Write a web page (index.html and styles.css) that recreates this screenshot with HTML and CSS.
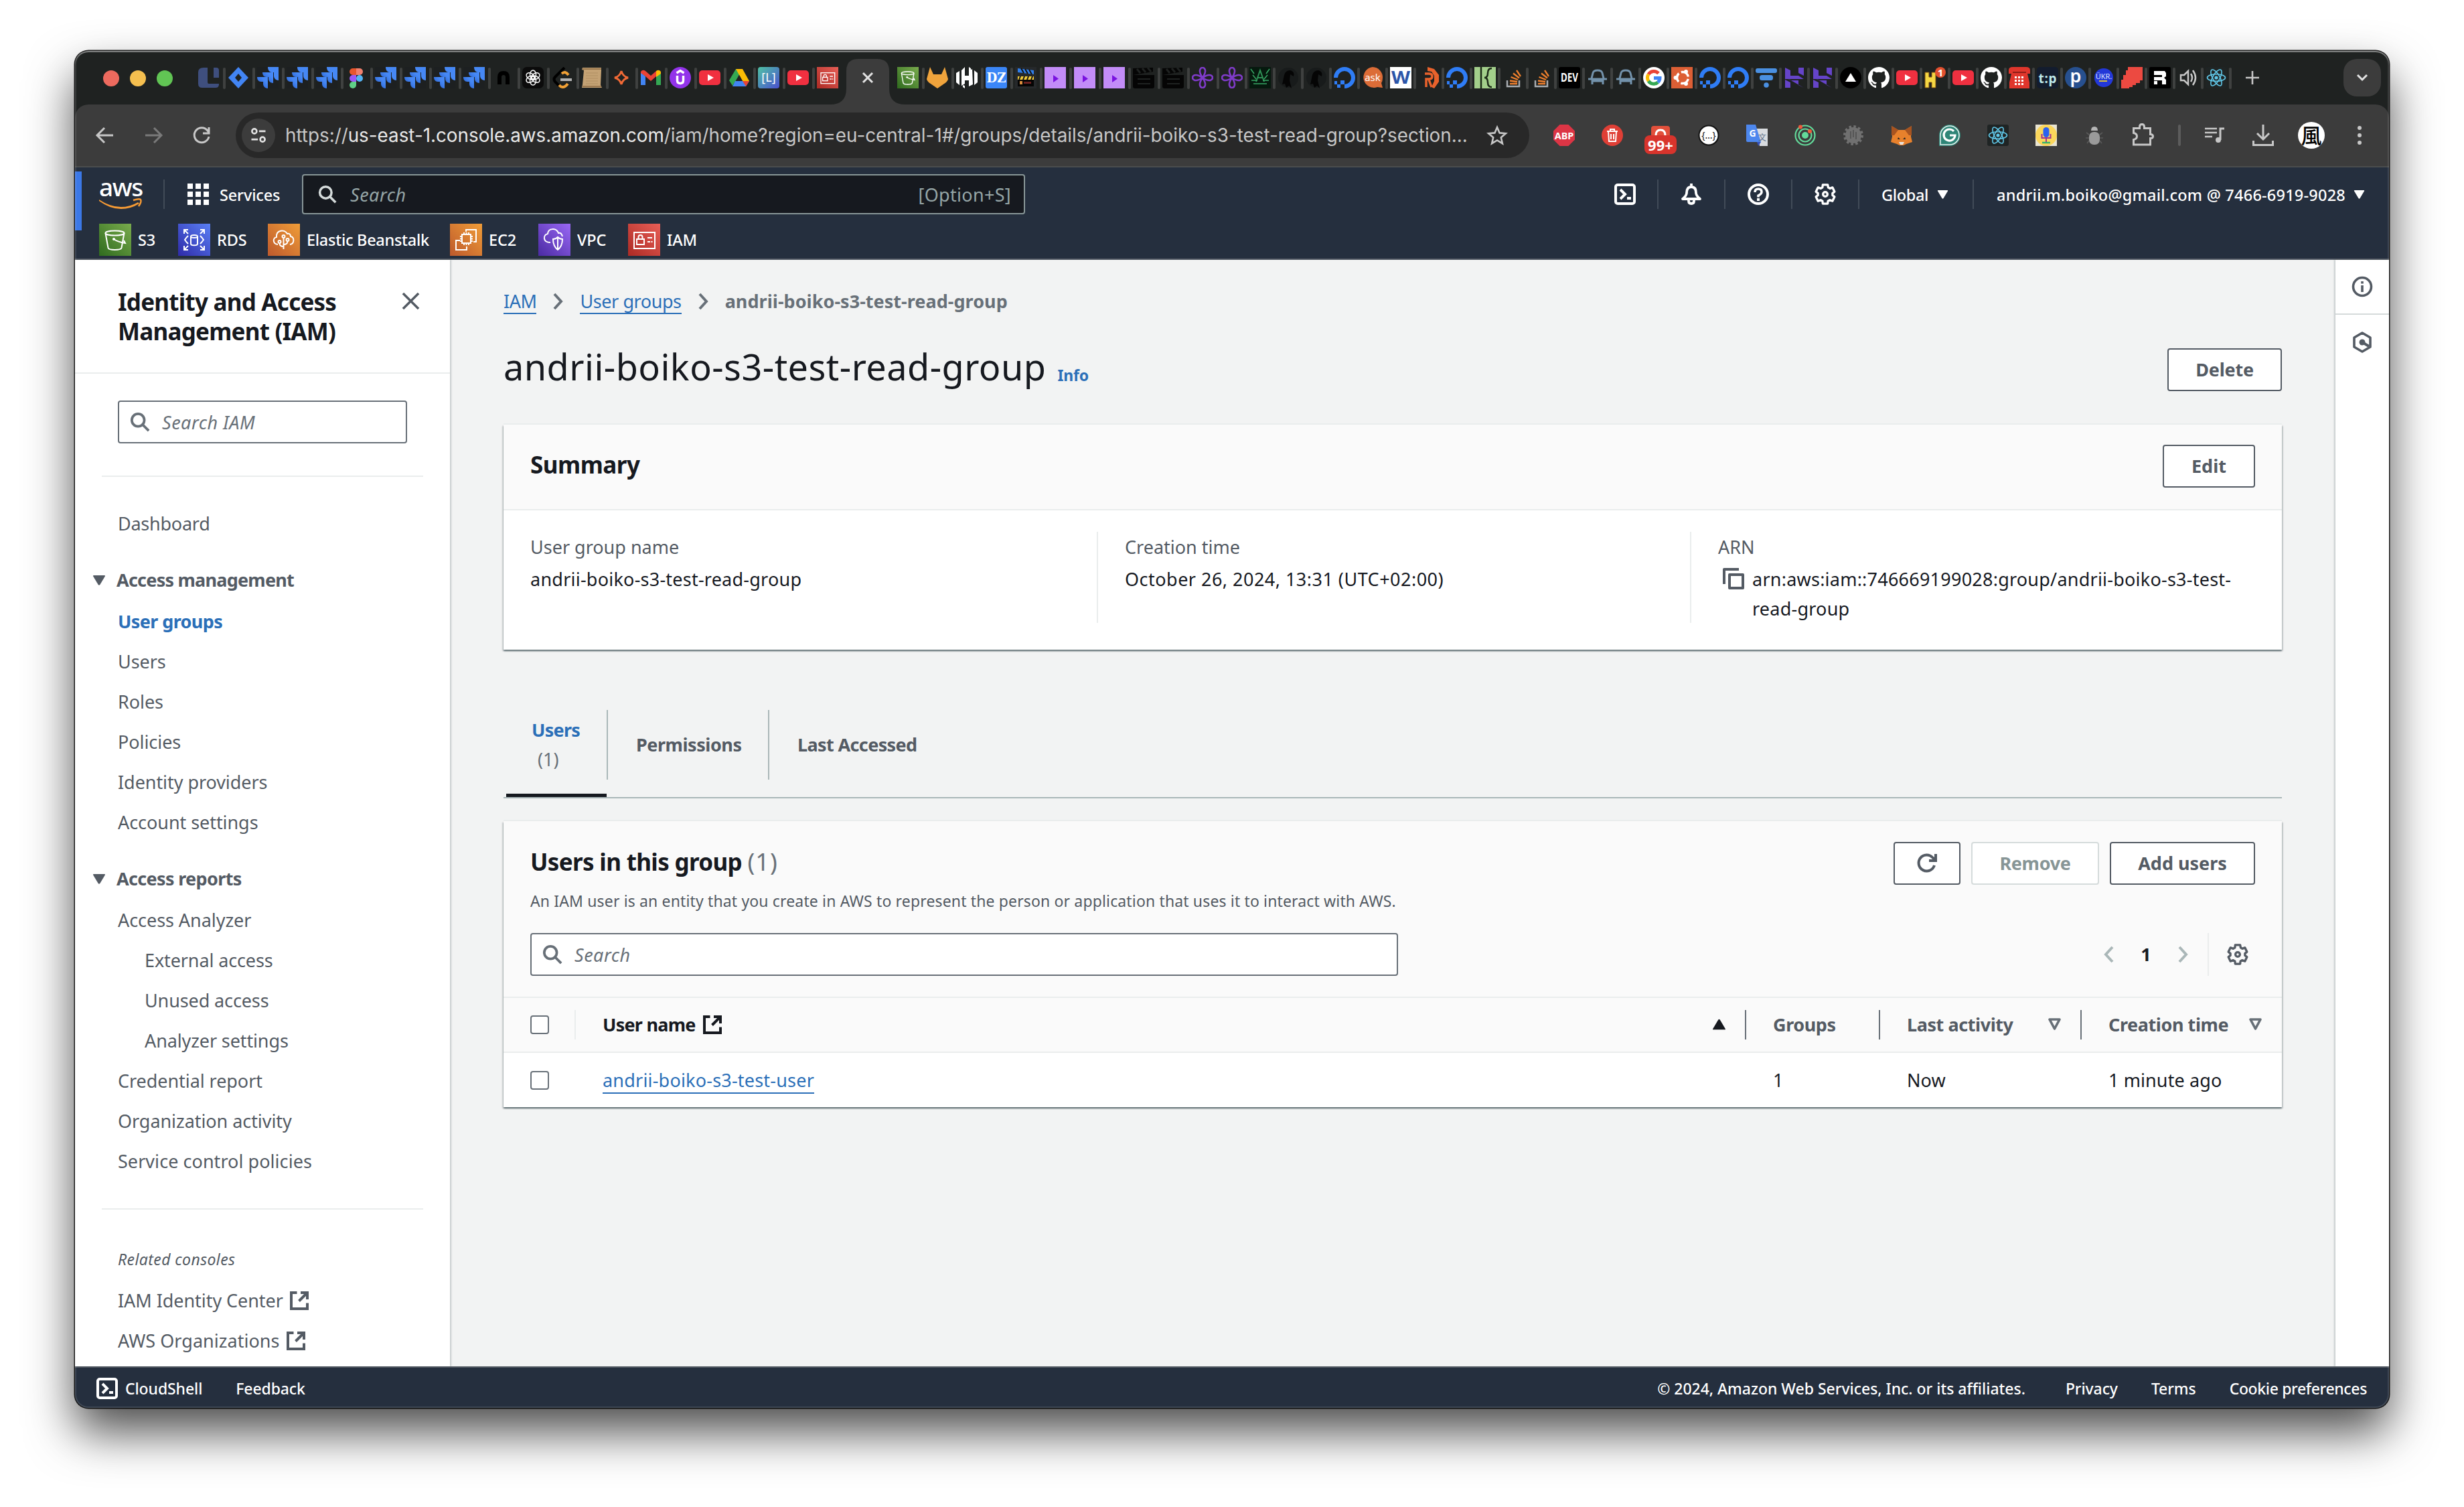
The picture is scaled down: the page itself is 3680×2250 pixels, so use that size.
FILE: index.html
```html
<!DOCTYPE html>
<html lang="en">
<head>
<meta charset="utf-8">
<title>andrii-boiko-s3-test-read-group | IAM | Global</title>
<link rel="stylesheet" href="styles.css">
</head>
<body>
<svg class="sprite" width="0" height="0">
  <defs>
    <linearGradient id="g-green" x1="0" y1="1" x2="1" y2="0"><stop offset="0" stop-color="#2f6b1e"/><stop offset="1" stop-color="#79ab4d"/></linearGradient>
    <linearGradient id="g-blue" x1="0" y1="1" x2="1" y2="0"><stop offset="0" stop-color="#2e2aa8"/><stop offset="1" stop-color="#5a80f5"/></linearGradient>
    <linearGradient id="g-orange" x1="0" y1="1" x2="1" y2="0"><stop offset="0" stop-color="#bd592c"/><stop offset="1" stop-color="#f09d38"/></linearGradient>
    <linearGradient id="g-purple" x1="0" y1="1" x2="1" y2="0"><stop offset="0" stop-color="#4a2aa2"/><stop offset="1" stop-color="#9a68f5"/></linearGradient>
    <linearGradient id="g-red" x1="0" y1="1" x2="1" y2="0"><stop offset="0" stop-color="#ac2a24"/><stop offset="1" stop-color="#e85f57"/></linearGradient>
    <linearGradient id="g-teal" x1="0" y1="0" x2="1" y2="1"><stop offset="0" stop-color="#4fc3a5"/><stop offset="1" stop-color="#4a4fd0"/></linearGradient>
    <linearGradient id="g-jira" x1="1" y1="0" x2="0" y2="1"><stop offset=".3" stop-color="#4688f5"/><stop offset="1" stop-color="#1f53c0"/></linearGradient>

    <symbol id="s3" viewBox="0 0 48 48"><rect width="48" height="48" fill="url(#g-green)"/><g fill="none" stroke="#fff" stroke-width="2"><ellipse cx="23.500" cy="14" rx="14" ry="3.500"/><path d="M9.500 14l4 22c1 4 19 4 20 0l4-22M22 23c4 3 10 5 17 6l-2-4"/></g><circle cx="22" cy="23" r="2" fill="#fff"/></symbol>
    <symbol id="rds" viewBox="0 0 48 48"><rect width="48" height="48" fill="url(#g-blue)"/><g fill="none" stroke="#fff" stroke-width="2"><ellipse cx="24" cy="19" rx="5" ry="2"/><path d="M19 19v11c0 3 10 3 10 0V19M9 9l6 6M9 15V9h6M39 9l-6 6M39 15V9h-6M9 39l6-6M9 33v6h6M39 39l-6-6M39 33v6h-6M15 18c-2 2-3 3-5 6 2 3 3 4 5 6M33 18c2 2 3 3 5 6-2 3-3 4-5 6"/></g></symbol>
    <symbol id="eb" viewBox="0 0 48 48"><rect width="48" height="48" fill="url(#g-orange)"/><g fill="none" stroke="#fff" stroke-width="2"><path d="M15 31c-8-1-8-10-2-11-1-11 12-12 16-5 3-1 5 1 5 4 6 1 6 11-1 12M23.500 38V21M23.500 34c-5 0-6-3-6-5M23.500 31c5 0 6-2 6-5"/><circle cx="23.500" cy="19" r="2"/><circle cx="17.500" cy="27" r="2"/><circle cx="29.500" cy="24" r="2"/></g></symbol>
    <symbol id="ec2" viewBox="0 0 48 48"><rect width="48" height="48" fill="url(#g-orange)"/><g fill="none" stroke="#fff" stroke-width="2"><rect x="18" y="16" width="13" height="13"/><path d="M21 13v3m3.500-3v3m3.500-3v3m-7 13v3m3.500-3v3m3.500-3v3M15 19h3m-3 3.500h3m-3 3.500h3M31 19h3m-3 3.500h3m-3 3.500h3M15 25H9v14h16v-5M24 12V9h15v18h-4"/></g></symbol>
    <symbol id="vpc" viewBox="0 0 48 48"><rect width="48" height="48" fill="url(#g-purple)"/><g fill="none" stroke="#fff" stroke-width="2"><path d="M18 28c-12 0-11-12-4-13 1-9 13-9 16-1 3-1 5 1 6 5M22 23c3 0 5-1 7-3 2 2 4 3 7 3 0 8-2 12-7 16-5-4-7-8-7-16zM29 20v19"/></g></symbol>
    <symbol id="iam" viewBox="0 0 48 48"><rect width="48" height="48" fill="url(#g-red)"/><g fill="none" stroke="#fff" stroke-width="2"><rect x="9" y="13" width="31" height="24"/><rect x="13" y="23" width="11" height="8"/><path d="M15.500 23v-3c0-4 6-4 6 0v3M29 21h7M29 27h4M34.500 27h2"/></g></symbol>

    <symbol id="jira" viewBox="0 0 32 32"><rect width="32" height="32" fill="#1d2021"/><path d="M16 0h16v20c-4 0-7-3-7-7V8h-3c-4 0-6-4-6-8z" fill="#4688f5"/><path d="M8 8h16v16c-4 0-7-3-7-6v-3h-3c-4 0-6-3-6-7z" fill="url(#g-jira)"/><path d="M0 15h16v17c-4 0-7-3-7-7v-3H6c-4 0-6-3-6-7z" fill="url(#g-jira)"/></symbol>
    <symbol id="loom" viewBox="0 0 32 32"><path d="M8 1h6v22q0 2 2 2h15v1q0 5-5 5H6q-6 0-6-6V8q0-7 8-7zM23 1h4q4 0 4 4v11h-8z" fill="#3f4f7e"/></symbol>
    <symbol id="diamond" viewBox="0 0 32 32"><path fill-rule="evenodd" d="M16 0l15 16-15 16L1 16zM16 10l-5 6 5 6 5-6z" fill="#4285f4"/></symbol>
    <symbol id="figma" viewBox="0 0 32 32"><path d="M11 2h5v10h-5a5 5 0 010-10z" fill="#e8562d"/><path d="M16 2h5a5 5 0 010 10h-5z" fill="#f1806e"/><path d="M11 12h5v10h-5a5 5 0 010-10z" fill="#9b59f6"/><circle cx="21" cy="17" r="5" fill="#55b5f5"/><path d="M11 22h5v5a5 5 0 11-5-5z" fill="#5fcf86"/></symbol>
    <symbol id="arch" viewBox="0 0 32 32"><path d="M10 26V15q0-6 6-6t6 6v11" fill="none" stroke="#000" stroke-width="6"/></symbol>
    <symbol id="openai" viewBox="0 0 32 32"><rect width="32" height="32" rx="7" fill="#0b0b0b"/><g fill="none" stroke="#fff" stroke-width="1.500"><ellipse cx="16" cy="11.500" rx="4.500" ry="6.500"/><ellipse cx="16" cy="11.500" rx="4.500" ry="6.500" transform="rotate(60 16 16)"/><ellipse cx="16" cy="11.500" rx="4.500" ry="6.500" transform="rotate(120 16 16)"/><ellipse cx="16" cy="11.500" rx="4.500" ry="6.500" transform="rotate(180 16 16)"/><ellipse cx="16" cy="11.500" rx="4.500" ry="6.500" transform="rotate(240 16 16)"/><ellipse cx="16" cy="11.500" rx="4.500" ry="6.500" transform="rotate(300 16 16)"/></g></symbol>
    <symbol id="leet" viewBox="0 0 32 32"><g fill="none" stroke-width="4"><path d="M19 1L5 15q-3 3 0 7l6 6" stroke="#000"/><path d="M15 10q5-5 10 2M11 27q6 7 13-2" stroke="#f0a035"/><path d="M13 19h17" stroke="#b3b3b3"/></g></symbol>
    <symbol id="scroll" viewBox="0 0 32 32"><path d="M2 1h28v4l-1 22 2 4H1l1-5L4 5 1 4z" fill="#c4a274"/><path d="M2 3h28M2 29h28" stroke="#8a6a42" stroke-width="1.500"/><path d="M7 9h18M7 13h18M7 17h18M7 21h18M7 25h18" stroke="#b08f62"/></symbol>
    <symbol id="spark" viewBox="0 0 32 32"><path d="M16 6q2 8 10 10-8 2-10 10-2-8-10-10 8-2 10-10z" fill="none" stroke="#f26a36" stroke-width="3"/></symbol>
    <symbol id="gmail" viewBox="0 0 32 32"><path d="M1 8v19h7V14z" fill="#4285f4"/><path d="M31 8v19h-7V14z" fill="#34a853"/><path d="M1 7q3-4 7-1l8 7 8-7v8l-8 7-8-7-7-5z" fill="#ea4335"/><path d="M24 6q4-3 7 1v3l-7 5z" fill="#fbbc04"/></symbol>
    <symbol id="udemy" viewBox="0 0 32 32"><circle cx="16" cy="16" r="16" fill="#9333ea"/><path d="M10.500 9L16 5.500 21.500 9M11.500 13v7q0 4.500 4.500 4.500t4.500-4.500v-7" fill="none" stroke="#fff" stroke-width="3.500"/></symbol>
    <symbol id="yt" viewBox="0 0 32 32"><rect y="5" width="32" height="22" rx="5" fill="#f03040"/><path d="M13 11l9 5-9 5z" fill="#fff"/></symbol>
    <symbol id="drive" viewBox="0 0 32 32"><path d="M11 3h10L10 22l-4 6-5-8z" fill="#34a853"/><path d="M11 3h10l10 18H21z" fill="#fbbc04"/><path d="M10 21h21l-5 8H6z" fill="#4285f4"/><path d="M21 21h10l-5 8z" fill="#ea4335"/><path d="M16 12l5 9H11z" fill="#1f2221"/></symbol>
    <symbol id="ell" viewBox="0 0 32 32"><rect width="32" height="32" rx="4" fill="url(#g-teal)"/><text x="16" y="22" text-anchor="middle" class="fav-text" font-size="18" fill="#fff">[L]</text></symbol>
    <symbol id="gitlab" viewBox="0 0 32 32"><path d="M5 0l5 11h12l5-11 5 18q0 2-3 5l-13 9L3 23q-3-3-3-5z" fill="#f0a43c"/></symbol>
    <symbol id="hashi" viewBox="0 0 32 32"><path d="M13 0v13h6V6l5-3 1 23-6 3v-9h-6v5l-5 3V5zM5 6v21l-5-4V9zM27 5l5 4v14l-5 4zM19 0l3 2v4h-3zM10 27l3 1v4l-3-2z" fill="#fff"/></symbol>
    <symbol id="dz" viewBox="0 0 32 32"><rect width="32" height="32" rx="3" fill="#3b86f7"/><text x="16" y="23" text-anchor="middle" class="fav-slab" font-size="20" fill="#fff" textLength="29" lengthAdjust="spacingAndGlyphs">DZ</text></symbol>
    <symbol id="clap" viewBox="0 0 32 32"><rect width="32" height="32" fill="#26292b"/><path d="M4 2l24 3v6L4 8z" fill="#2f7de8"/><path d="M4 14h24v5H4z" fill="#f4cd3b"/><path d="M4 19h24v10H4z" fill="#050505"/><path d="M9 2l4 7m2-6l4 7m2-6l4 7M8 14l-2 5m8-5l-2 5m8-5l-2 5m8-5l-2 5" stroke="#111" stroke-width="2"/><path d="M7 21h4v5H7z" fill="#d98b3b"/><path d="M13 22h11v3H13z" fill="#6b1f1f"/></symbol>
    <symbol id="play" viewBox="0 0 32 32"><rect width="32" height="32" fill="#c38cf8"/><path d="M13 12l8 5.500-8 5.500z" fill="#7a12e0"/></symbol>
    <symbol id="board" viewBox="0 0 32 32"><path d="M0 2l30-1v6L0 12zM0 12h32v17q0 3-3 3H3q-3 0-3-3z" fill="#050505"/><path d="M6 3l5 6m3-7l5 6m3-7l5 6" stroke="#1f2221" stroke-width="3"/><path d="M7 18h19M7 25h19" stroke="#1f2221" stroke-width="2"/></symbol>
    <symbol id="flower" viewBox="0 0 32 32"><g fill="none" stroke="#7f3bc9" stroke-width="2.600"><path d="M16 16C8 4 14 1 16 1s8 3 0 15c8 12 2 15 0 15s-8-3 0-15zM16 16C4 24 1 18 1 16s3-8 15 0c12-8 15-2 15 0s-3 8-15 0z"/></g></symbol>
    <symbol id="matrix" viewBox="0 0 32 32"><rect width="32" height="32" fill="#06190e"/><path d="M10 22l6-17 6 17M12 16h8" fill="none" stroke="#2f8f55" stroke-width="2"/><path d="M2 3l5 7M30 3l-5 7M5 12l5 6M27 12l-5 6M3 20h9M20 20h9M6 25h20" stroke="#37a865" stroke-width="1.500"/></symbol>
    <symbol id="raven" viewBox="0 0 32 32"><circle cx="16" cy="16" r="15" fill="#181b1b"/><path d="M7 26l3-14q2-7 9-7 7 2 5 9l-5-3-1 9 3 12-4-4-4 3-2-6z" fill="#050505"/></symbol>
    <symbol id="docean" viewBox="0 0 32 32"><path d="M16 29a13 13 0 10-13-13" fill="none" stroke="#2f7df6" stroke-width="6"/><path d="M10 20h6v6h-6zM5 26h5v5H5zM1 21h4v5H1z" fill="#2f7df6"/></symbol>
    <symbol id="ask" viewBox="0 0 32 32"><path d="M16 0a15.500 15.500 0 0115 16q0 5-2 8l2 7-8-1A15.500 15.500 0 1116 0z" fill="#dc6c37"/><text x="16" y="21" text-anchor="middle" class="fav-text" font-size="15" fill="#fff">ask</text></symbol>
    <symbol id="dub" viewBox="0 0 32 32"><rect width="32" height="32" fill="#fff"/><text x="16" y="25" text-anchor="middle" class="fav-text" font-size="26" fill="#2b55a8" textLength="28" lengthAdjust="spacingAndGlyphs" font-weight="700">W</text></symbol>
    <symbol id="rr" viewBox="0 0 32 32"><path d="M14 0l10 3 7 9v10l-7 10-4-2 4-9v-8l-4-6-6-1z" fill="#e8622c"/><path d="M10 10h6q5 0 5 4t-5 4h-4v12M16 19l4 11" fill="none" stroke="#e8622c" stroke-width="3.500"/></symbol>
    <symbol id="kk" viewBox="0 0 32 32"><rect width="32" height="32" fill="#a3cf8b"/><path d="M10 0v32M26 2q-6 0-6 7t-5 7q5 0 5 7t6 7" fill="none" stroke="#1c2a17" stroke-width="2.500"/></symbol>
    <symbol id="so" viewBox="0 0 32 32"><path d="M7 20v9h18v-9" fill="none" stroke="#a9adb1" stroke-width="2.500"/><path d="M11 25h11M11 20.500l11 1.500M12.500 15l10.500 4M16 9.500l9 7M21 5l6 9" stroke="#f0802d" stroke-width="2.300"/></symbol>
    <symbol id="dev" viewBox="0 0 32 32"><rect width="32" height="32" rx="3" fill="#000"/><text x="16" y="22" text-anchor="middle" class="fav-text" font-size="17" font-weight="700" fill="#fff" textLength="26" lengthAdjust="spacingAndGlyphs">DEV</text></symbol>
    <symbol id="car" viewBox="0 0 32 32"><path d="M7 17l2-8q1-4 7-4t7 4l2 8M2 18h28M8 26v-5h16v5" fill="none" stroke="#7392ab" stroke-width="3"/></symbol>
    <symbol id="goog" viewBox="0 0 32 32"><circle cx="16" cy="16" r="16" fill="#fff"/><g fill="none" stroke-width="5"><path d="M23 9.500A9.500 9.500 0 008 11" stroke="#ea4335"/><path d="M8 11a9.500 9.500 0 000 10" stroke="#fbbc04"/><path d="M8 21a9.500 9.500 0 0014 2" stroke="#34a853"/><path d="M22 23q3-3 3-6.500h-9" stroke="#4285f4"/></g></symbol>
    <symbol id="ubuntu" viewBox="0 0 32 32"><rect width="32" height="32" fill="#dd5f35"/><circle cx="17" cy="16" r="8.500" fill="none" stroke="#fff" stroke-width="3.500" stroke-dasharray="14 3.800" stroke-dashoffset="-2"/><circle cx="6.500" cy="16" r="3" fill="#fff"/><circle cx="22" cy="7" r="3" fill="#fff"/><circle cx="22" cy="25" r="3" fill="#fff"/></symbol>
    <symbol id="funnel" viewBox="0 0 32 32"><rect y="2" width="32" height="7" rx="3" fill="#4a90e2"/><rect x="6" y="12" width="20" height="8" rx="3.500" fill="#4a90e2"/><circle cx="16" cy="27" r="3.800" fill="#4a90e2"/></symbol>
    <symbol id="haitch" viewBox="0 0 32 32"><path d="M2 1l8 4v8h12l8 5H2zM30 31l-8-4v-7H10l-8-5M22 1h8v12l-8-4zM2 19l8 4v8H2z" fill="#6544c9"/></symbol>
    <symbol id="vercel" viewBox="0 0 32 32"><circle cx="16" cy="16" r="16" fill="#000"/><path d="M16 9l8 13H8z" fill="#fff"/></symbol>
    <symbol id="github" viewBox="0 0 16 16"><path fill="#fff" d="M8 0C3.580 0 0 3.580 0 8c0 3.540 2.290 6.530 5.470 7.590.4.070.55-.17.55-.38 0-.19-.01-.82-.01-1.490-2.010.37-2.530-.49-2.690-.94-.09-.23-.48-.94-.82-1.130-.28-.15-.68-.52-.01-.53.63-.01 1.080.58 1.230.82.72 1.210 1.870.87 2.330.66.07-.52.28-.87.51-1.070-1.780-.2-3.640-.89-3.640-3.950 0-.87.31-1.590.82-2.150-.08-.2-.36-1.020.08-2.120 0 0 .67-.21 2.200.82.64-.18 1.320-.27 2-.27s1.360.09 2 .27c1.530-1.040 2.200-.82 2.200-.82.44 1.100.16 1.920.08 2.120.51.56.82 1.270.82 2.150 0 3.070-1.870 3.750-3.650 3.950.29.25.54.73.54 1.480 0 1.070-.01 1.930-.01 2.200 0 .21.15.46.55.38A8.010 8.010 0 0016 8c0-4.420-3.580-8-8-8z"/></symbol>
    <symbol id="hone" viewBox="0 0 32 32"><path d="M1 8h6v7h4V8h6v23h-6v-8H7v8H1z" fill="#f5d743" stroke="#7a4a12"/><circle cx="24" cy="8" r="8" fill="#e2502f"/><text x="24" y="14" text-anchor="middle" class="fav-text" font-size="15" font-weight="700" fill="#fff">1</text></symbol>
    <symbol id="phone" viewBox="0 0 32 32"><path d="M0 5q0-5 6-5h20q6 0 6 5v5h-4l3 13v9H1v-9l3-13H0z" fill="#e0362c"/><path d="M6 8h20" stroke="#8e1d17" stroke-width="2"/><path d="M9 14h3v3H9zm5 0h3v3h-3zm5 0h3v3h-3zM9 19h3v3H9zm5 0h3v3h-3zm5 0h3v3h-3zM9 24h3v3H9zm5 0h3v3h-3zm5 0h3v3h-3z" fill="#fff"/></symbol>
    <symbol id="tip" viewBox="0 0 32 32"><rect width="32" height="32" rx="5" fill="#131c2e"/><text x="16" y="24" text-anchor="middle" class="fav-text" font-size="19" font-weight="700" fill="#bfe8ea" textLength="27">t:p</text></symbol>
    <symbol id="pee" viewBox="0 0 32 32"><circle cx="16" cy="16" r="16" fill="#27508f"/><text x="16" y="23" text-anchor="middle" class="fav-text" font-size="27" font-weight="600" fill="#fff">p</text></symbol>
    <symbol id="ukr" viewBox="0 0 32 32"><circle cx="16" cy="16" r="14" fill="#2338d8"/><text x="16" y="18" text-anchor="middle" class="fav-text" font-size="11" fill="#dfe6ff">ÜKR.</text><path d="M9 21h12" stroke="#d8c23a" stroke-width="2"/></symbol>
    <symbol id="redpix" viewBox="0 0 32 32"><path d="M10 0h22v20h-4v4h-6v3h-5v3h-5v2H0V19h3v-7h4V5h3z" fill="#ec4a41"/></symbol>
    <symbol id="rbold" viewBox="0 0 32 32"><rect width="32" height="32" rx="2" fill="#000"/><path d="M7 6h16l2 3v5l-3 2 3 3v7h-6v-6H7v-5h12v-3H7zM7 21h5v5H7z" fill="#fff"/></symbol>
    <symbol id="audio" viewBox="0 0 32 32"><path d="M5 12v8h5l6 6V6l-6 6zM20 10q4 6 0 12M23 5q8 11 0 22" fill="none" stroke="#c7c7c7" stroke-width="2.500"/></symbol>
    <symbol id="react" viewBox="0 0 32 32"><rect width="32" height="32" rx="3" fill="#1f2424"/><g fill="none" stroke="#61c9ea" stroke-width="1.600"><ellipse cx="16" cy="16" rx="13.500" ry="5.200"/><ellipse cx="16" cy="16" rx="13.500" ry="5.200" transform="rotate(60 16 16)"/><ellipse cx="16" cy="16" rx="13.500" ry="5.200" transform="rotate(120 16 16)"/></g><circle cx="16" cy="16" r="2.600" fill="#61c9ea"/></symbol>

    <symbol id="search" viewBox="0 0 16 16"><circle cx="6.500" cy="6.500" r="5" fill="none" stroke="currentColor" stroke-width="2"/><path d="M10 10l5 5" stroke="currentColor" stroke-width="2"/></symbol>
    <symbol id="external" viewBox="0 0 28 28"><path d="M10.500 2H2v24h24v-8.500M16 2h10v10M25 3L13.500 14.500" fill="none" stroke="currentColor" stroke-width="4"/></symbol>
    <symbol id="shell" viewBox="0 0 32 32"><rect x="2" y="2" width="28" height="28" rx="3" fill="none" stroke="currentColor" stroke-width="4"/><path d="M9 9l7 7-7 7M19 22h6" fill="none" stroke="currentColor" stroke-width="4"/></symbol>
    <symbol id="gear" viewBox="1 1 22 22"><g fill="none" stroke="currentColor" stroke-width="2.300" stroke-linejoin="round"><path d="M19.430 12.980c.04-.32.07-.64.07-.98 0-.34-.03-.66-.07-.98l2.110-1.650-2.120-4.350-2.660 1.030c-.52-.4-1.080-.73-1.690-.98L14.500 2.300h-5l-.37 2.770c-.61.25-1.170.59-1.690.98L4.600 5.020 2.460 9.370l2.110 1.650c-.04.32-.07.65-.07.98 0 .33.03.66.07.98l-2.110 1.650 2.140 4.350 2.840-1.030c.52.4 1.080.73 1.690.98l.37 2.770h5l.37-2.770c.61-.25 1.170-.59 1.690-.98l2.840 1.030 2.140-4.350z"/><circle cx="12" cy="12" r="2.300"/></g></symbol>
    <symbol id="chevron" viewBox="0 0 16 28"><path d="M2 3l10 11L2 25" fill="none" stroke="currentColor" stroke-width="4"/></symbol>
    <symbol id="caret" viewBox="0 0 20 16"><path d="M2 1h16q1.500 0 .8 1.400l-7.500 12.600q-1.300 1.600-2.600 0L1.200 2.400Q.5 1 2 1z" fill="currentColor"/></symbol>
    <symbol id="caret-line" viewBox="0 0 20 20"><path d="M2.500 2h15L10 16z" fill="none" stroke="currentColor" stroke-width="3.600" stroke-linejoin="round"/></symbol>
    <symbol id="refresh" viewBox="0 0 32 32"><path d="M27 19a12 12 0 11-2.500-11.500L28 11M29 2v10H19" fill="none" stroke="currentColor" stroke-width="4"/></symbol>
  </defs>
</svg>

<div class="window">
  <div class="tabstrip">
    <div class="lights"><i class="light red"></i><i class="light yellow"></i><i class="light green"></i></div>
    <div class="tabs wide">
      <span class="tab"><svg><use href="#loom"/></svg></span><span class="tab"><svg><use href="#diamond"/></svg></span><span class="tab"><svg><use href="#jira"/></svg></span><span class="tab"><svg><use href="#jira"/></svg></span><span class="tab"><svg><use href="#jira"/></svg></span><span class="tab"><svg><use href="#figma"/></svg></span><span class="tab"><svg><use href="#jira"/></svg></span><span class="tab"><svg><use href="#jira"/></svg></span><span class="tab"><svg><use href="#jira"/></svg></span><span class="tab"><svg><use href="#jira"/></svg></span><span class="tab"><svg><use href="#arch"/></svg></span><span class="tab"><svg><use href="#openai"/></svg></span><span class="tab"><svg><use href="#leet"/></svg></span><span class="tab"><svg><use href="#scroll"/></svg></span><span class="tab"><svg><use href="#spark"/></svg></span><span class="tab"><svg><use href="#gmail"/></svg></span><span class="tab"><svg><use href="#udemy"/></svg></span><span class="tab"><svg><use href="#yt"/></svg></span><span class="tab"><svg><use href="#drive"/></svg></span><span class="tab"><svg><use href="#ell"/></svg></span><span class="tab"><svg><use href="#yt"/></svg></span><span class="tab bare"><svg><use href="#iam"/></svg></span>
    </div>
    <div class="tab-active">
      <svg class="tab-shape" viewBox="0 0 112 68"><path d="M0 68q24 0 24-24V18Q24 0 42 0h28q18 0 18 18v26q0 24 24 24z" fill="#3c3c3c"/><path d="M49 21l14 14M63 21L49 35" stroke="#e3e3e3" stroke-width="3"/></svg>
    </div>
    <div class="tabs wide">
      <span class="tab"><svg><use href="#s3"/></svg></span><span class="tab"><svg><use href="#gitlab"/></svg></span><span class="tab"><svg><use href="#hashi"/></svg></span><span class="tab"><svg><use href="#dz"/></svg></span><span class="tab"><svg><use href="#clap"/></svg></span><span class="tab"><svg><use href="#play"/></svg></span><span class="tab"><svg><use href="#play"/></svg></span><span class="tab"><svg><use href="#play"/></svg></span><span class="tab"><svg><use href="#board"/></svg></span><span class="tab"><svg><use href="#board"/></svg></span><span class="tab"><svg><use href="#flower"/></svg></span>
    </div>
    <div class="tabs narrow">
      <span class="tab"><svg><use href="#flower"/></svg></span><span class="tab"><svg><use href="#matrix"/></svg></span><span class="tab"><svg><use href="#raven"/></svg></span><span class="tab"><svg><use href="#raven"/></svg></span><span class="tab"><svg><use href="#docean"/></svg></span><span class="tab"><svg><use href="#ask"/></svg></span><span class="tab"><svg><use href="#dub"/></svg></span><span class="tab"><svg><use href="#rr"/></svg></span><span class="tab"><svg><use href="#docean"/></svg></span><span class="tab"><svg><use href="#kk"/></svg></span><span class="tab"><svg><use href="#so"/></svg></span><span class="tab"><svg><use href="#so"/></svg></span><span class="tab"><svg><use href="#dev"/></svg></span><span class="tab"><svg><use href="#car"/></svg></span><span class="tab"><svg><use href="#car"/></svg></span><span class="tab"><svg><use href="#goog"/></svg></span><span class="tab"><svg><use href="#ubuntu"/></svg></span><span class="tab"><svg><use href="#docean"/></svg></span><span class="tab"><svg><use href="#docean"/></svg></span><span class="tab"><svg><use href="#funnel"/></svg></span><span class="tab"><svg><use href="#haitch"/></svg></span><span class="tab"><svg><use href="#haitch"/></svg></span><span class="tab"><svg><use href="#vercel"/></svg></span><span class="tab"><svg><use href="#github"/></svg></span><span class="tab"><svg><use href="#yt"/></svg></span><span class="tab"><svg><use href="#hone"/></svg></span><span class="tab"><svg><use href="#yt"/></svg></span><span class="tab"><svg><use href="#github"/></svg></span><span class="tab"><svg><use href="#phone"/></svg></span><span class="tab"><svg><use href="#tip"/></svg></span><span class="tab"><svg><use href="#pee"/></svg></span><span class="tab"><svg><use href="#ukr"/></svg></span><span class="tab"><svg><use href="#redpix"/></svg></span><span class="tab"><svg><use href="#rbold"/></svg></span><span class="tab"><svg><use href="#audio"/></svg></span><span class="tab"><svg><use href="#react"/></svg></span>
    </div>
    <svg class="new-tab" viewBox="0 0 24 24"><path d="M12 2v20M2 12h20" stroke="#c7c7c7" stroke-width="2.600"/></svg>
    <div class="tab-search"><svg viewBox="0 0 20 20"><path d="M3 6l7 7 7-7" fill="none" stroke="#e3e3e3" stroke-width="3"/></svg></div>
  </div>

  <div class="toolbar">
    <div class="nav-buttons">
      <svg class="nav" viewBox="0 0 32 32"><path d="M28 16H5M15 5L4 16l11 11" fill="none" stroke="#c7c7c7" stroke-width="3"/></svg>
      <svg class="nav" viewBox="0 0 32 32"><path d="M4 16h23M17 5l11 11-11 11" fill="none" stroke="#7a7a7a" stroke-width="3"/></svg>
      <svg class="nav" viewBox="0 0 32 32"><path d="M27 18a11 11 0 11-2-9l2 3M27 4v9h-9" fill="none" stroke="#c7c7c7" stroke-width="3"/></svg>
    </div>
    <div class="omnibox">
      <span class="site-info"><svg viewBox="0 0 32 32"><g fill="none" stroke="#e3e3e3" stroke-width="3"><circle cx="9" cy="9" r="4"/><path d="M17 9h11M4 23h11"/><circle cx="23" cy="23" r="4"/></g></svg></span>
      <span class="url">https://<b>us-east-1.console.aws.amazon.com</b>/iam/home?region=eu-central-1#/groups/details/andrii-boiko-s3-test-read-group?section…</span>
      <svg class="star" viewBox="0 0 32 32"><path d="M16 4l3.600 8.400 9.200.8-7 6 2.100 9L16 23.400 8.100 28.200l2.100-9-7-6 9.200-.8z" fill="none" stroke="#c7c7c7" stroke-width="2.600"/></svg>
    </div>
    <div class="extensions">
      <span class="ext"><svg viewBox="0 0 32 32"><path d="M9.500 0h13L32 9.500v13L22.500 32h-13L0 22.500v-13z" fill="#dc3545"/><text x="16" y="21.500" text-anchor="middle" class="fav-text" font-size="14.500" font-weight="700" fill="#fff">ABP</text></svg></span>
      <span class="ext"><svg viewBox="0 0 32 32"><circle cx="16" cy="16" r="16" fill="#df3f36"/><path d="M8 10h16M13 10V7h6v3M10 10l1 15h10l1-15M14 14v8M18 14v8" fill="none" stroke="#fff" stroke-width="2"/></svg></span>
      <span class="ext"><svg viewBox="0 0 32 32"><rect x="2" y="2" width="28" height="26" rx="4" fill="#e2503b"/><path d="M9 16q0-8 7-8t7 8" fill="none" stroke="#fff" stroke-width="3"/></svg><em class="badge">99+</em></span>
      <span class="ext"><svg viewBox="0 0 32 32"><circle cx="16" cy="16" r="14.500" fill="#fff" stroke="#111" stroke-width="2"/><text x="16" y="21" text-anchor="middle" class="fav-text" font-size="14" fill="#111">{…}</text></svg></span>
      <span class="ext"><svg viewBox="0 0 32 32"><path d="M15 6h17v26H20z" fill="#d9dce0"/><path d="M0 0h14l8 26H2q-2 0-2-2z" fill="#4d87ee"/><path d="M16 26h6l-4 6z" fill="#3550b8"/><text x="9.500" y="18" text-anchor="middle" class="fav-text" font-size="14" font-weight="700" fill="#fff">G</text><text x="24" y="24" text-anchor="middle" class="fav-cjk" font-size="12" fill="#5d6f88">文</text></svg></span>
      <span class="ext"><svg viewBox="0 0 32 32"><g fill="none" stroke="#63d99a" stroke-width="2.200"><circle cx="16" cy="16" r="14.500"/><circle cx="16" cy="16" r="9.500"/></g><circle cx="16" cy="16" r="5" fill="#63d99a"/><circle cx="9" cy="3.500" r="3" fill="#ef5b3c"/><circle cx="23" cy="10" r="3" fill="#ef5b3c"/></svg></span>
      <span class="ext"><svg viewBox="0 0 32 32"><circle cx="16" cy="16" r="12" fill="#707070"/><circle cx="16" cy="16" r="13" fill="none" stroke="#707070" stroke-width="4" stroke-dasharray="3.500 3.300"/><path d="M12 10v11m4-13v11m4-8v11" stroke="#555" stroke-width="2"/></svg></span>
      <span class="ext"><svg viewBox="0 0 32 32"><path d="M1 2l10 6h10l10-6-1 16 2 8-9 3-4 2h-6l-4-2-9-3 2-8z" fill="#e8812c"/><path d="M1 2l10 6-6 8-4 0zM31 2L21 8l6 8h4z" fill="#a85420"/><path d="M11 19l3 3-4 0zM21 19l-3 3 4 0z" fill="#222"/><path d="M12 26h8l-2 4h-4z" fill="#e8e2dc"/></svg></span>
      <span class="ext"><svg viewBox="0 0 32 32"><path d="M0 32V16a16 16 0 1116 16z" fill="#2f8577"/><path d="M2 30V16a14 14 0 1114 14z" fill="none" stroke="#e6f2ef" stroke-width="1.500"/><path d="M22 10a8.500 8.500 0 102 6h-8" fill="none" stroke="#fff" stroke-width="3.200"/></svg></span>
      <span class="ext"><svg><use href="#react"/></svg></span>
      <span class="ext"><svg viewBox="0 0 32 32"><rect width="32" height="32" fill="#e9e4d2"/><circle cx="16" cy="16" r="16" fill="#fbd65b"/><rect x="11.500" y="4" width="9" height="15" rx="4.500" fill="#2b62f0"/><path d="M9.500 14v6h13v-6M16 21v5" fill="none" stroke="#a2338f" stroke-width="2"/><path d="M10 27h12" stroke="#35b36b" stroke-width="2.500"/></svg></span>
      <span class="ext"><svg viewBox="0 0 32 32"><path d="M11 9q0-6 5-6t5 6z" fill="#b5b5b5"/><rect x="8" y="11" width="16" height="19" rx="7" fill="#9a9a9a"/><path d="M8 15l-4-3m4 8H3m5 4l-3 4m19-13l4-3m-4 8h5m-5 4l3 4" stroke="#5a5a5a" stroke-width="1.600"/></svg></span>
      <span class="ext"><svg viewBox="0 0 32 32"><path d="M3 5h9V3q0-4 3.500-4T19 3v2h9v9q4 0 4 3t-4 3v9.500H3V22q5-1 5-5t-5-5z" transform="translate(-.5 .5)" fill="none" stroke="#c7c7c7" stroke-width="3"/></svg></span>
    </div>
    <span class="toolbar-rule"></span>
    <div class="browser-actions">
      <span class="ext"><svg viewBox="0 0 32 32"><path d="M1 6h18M1 12h18M1 18h11" stroke="#c7c7c7" stroke-width="2.600"/><path d="M24 23V6h6" fill="none" stroke="#c7c7c7" stroke-width="3"/><circle cx="21" cy="23" r="4" fill="#c7c7c7"/></svg></span>
      <span class="ext"><svg viewBox="0 0 32 32"><path d="M16 0v21M7 13l9 9 9-9M1.500 24v6.500h29V24" fill="none" stroke="#c7c7c7" stroke-width="3"/></svg></span>
      <span class="ext"><span class="avatar">風</span></span>
      <span class="ext"><svg viewBox="0 0 32 32"><g fill="#c7c7c7"><circle cx="16" cy="5" r="3"/><circle cx="16" cy="16" r="3"/><circle cx="16" cy="27" r="3"/></g></svg></span>
    </div>
  </div>

  <header class="aws-nav">
    <span class="focus-bar"></span>
    <div class="nav-row">
      <div class="logo-cell"><span class="logo"><span class="logo-word">aws</span><svg class="smile" viewBox="0 0 64 16"><path d="M0 1q30 20 58 4l2 2Q30 25 0 3z" fill="#f79b34"/><path d="M51 2q9-3 11-1 2 3-3 10" fill="none" stroke="#f79b34" stroke-width="2.500"/></svg></span></div>
      <div class="services-cell">
        <svg class="i32" viewBox="0 0 32 32"><path d="M0 0h8v8H0zM12 0h8v8h-8zM24 0h8v8h-8zM0 12h8v8H0zM12 12h8v8h-8zM24 12h8v8h-8zM0 24h8v8H0zM12 24h8v8h-8zM24 24h8v8h-8z" fill="#fff"/></svg>
        <span class="nav-text services">Services</span>
      </div>
      <div class="nav-search"><svg class="i28"><use href="#search"/></svg><span class="nav-ph">Search</span><span class="nav-key">[Option+S]</span></div>
      <div class="nav-tools">
        <span class="tool"><svg class="i32"><use href="#shell"/></svg></span>
        <span class="tool"><svg class="i32" viewBox="0 0 32 32"><path d="M16 0v4M16 5q-7 0-7 9 0 4-6 9h26q-6-5-6-9 0-9-7-9zM12 24v2q0 4 4 4t4-4v-2" fill="none" stroke="#fff" stroke-width="3.800" stroke-linejoin="round"/></svg></span>
        <span class="tool"><svg class="i32" viewBox="0 0 32 32"><g fill="none" stroke="#fff"><circle cx="16" cy="16" r="14" stroke-width="4"/><path d="M11 13q0-5 5-5t5 4.500q0 3-5 5.500v2.500" stroke-width="3.600"/></g><rect x="14" y="22" width="4" height="4" fill="#fff"/></svg></span>
        <span class="tool"><svg class="i32"><use href="#gear"/></svg></span>
      </div>
      <div class="region"><span class="nav-text">Global</span><svg class="caret-s"><use href="#caret"/></svg></div>
      <div class="account"><span class="nav-text acct">andrii.m.boiko@gmail.com @ 7466-6919-9028</span><svg class="caret-s"><use href="#caret"/></svg></div>
    </div>
    <div class="fav-row">
      <a class="fav f1"><svg class="i48"><use href="#s3"/></svg>S3</a>
      <a class="fav f2"><svg class="i48"><use href="#rds"/></svg>RDS</a>
      <a class="fav f3"><svg class="i48"><use href="#eb"/></svg>Elastic Beanstalk</a>
      <a class="fav f4"><svg class="i48"><use href="#ec2"/></svg>EC2</a>
      <a class="fav f5"><svg class="i48"><use href="#vpc"/></svg>VPC</a>
      <a class="fav f6"><svg class="i48"><use href="#iam"/></svg>IAM</a>
    </div>
  </header>

  <div class="workspace">
    <aside class="sidebar">
      <div class="side-head">
        <h2>Identity and Access<br>Management (IAM)</h2>
        <svg class="close" viewBox="0 0 28 28"><path d="M2 2l24 24M26 2L2 26" stroke="#545b64" stroke-width="3.600"/></svg>
      </div>
      <div class="side-search"><svg class="i30"><use href="#search"/></svg><span>Search IAM</span></div>
      <hr class="side-rule">
      <nav class="side-nav">
        <a class="item dash">Dashboard</a>
        <div class="group"><svg class="caret-m"><use href="#caret"/></svg>Access management</div>
        <a class="item current">User groups</a>
        <a class="item">Users</a>
        <a class="item">Roles</a>
        <a class="item">Policies</a>
        <a class="item">Identity providers</a>
        <a class="item">Account settings</a>
        <div class="group second"><svg class="caret-m"><use href="#caret"/></svg>Access reports</div>
        <a class="item">Access Analyzer</a>
        <a class="item sub">External access</a>
        <a class="item sub">Unused access</a>
        <a class="item sub">Analyzer settings</a>
        <a class="item">Credential report</a>
        <a class="item">Organization activity</a>
        <a class="item scp">Service control policies</a>
      </nav>
      <hr class="side-rule lower">
      <nav class="side-nav related">
        <div class="related-title">Related consoles</div>
        <a class="item">IAM Identity Center<svg class="i28"><use href="#external"/></svg></a>
        <a class="item orgs">AWS Organizations<svg class="i28"><use href="#external"/></svg></a>
      </nav>
    </aside>

    <main class="main">
      <nav class="crumbs">
        <a class="link crumb-iam">IAM</a><svg><use href="#chevron"/></svg><a class="link crumb-ug">User groups</a><svg><use href="#chevron"/></svg><b>andrii-boiko-s3-test-read-group</b>
      </nav>
      <div class="page-head">
        <h1>andrii-boiko-s3-test-read-group</h1><a class="info">Info</a>
        <button class="btn delete">Delete</button>
      </div>

      <section class="card summary">
        <div class="card-head"><h2>Summary</h2><button class="btn edit">Edit</button></div>
        <div class="details">
          <div class="detail"><div class="label">User group name</div><div class="value id">andrii-boiko-s3-test-read-group</div></div>
          <div class="detail"><div class="label">Creation time</div><div class="value date">October 26, 2024, 13:31 (UTC+02:00)</div></div>
          <div class="detail"><div class="label">ARN</div><div class="arn"><svg class="copy" viewBox="0 0 32 32"><path d="M2 24V2h22M10 10h20v20H10z" fill="none" stroke="#545b64" stroke-width="4" stroke-linejoin="round"/></svg><div class="value id">arn:aws:iam::746669199028:group/andrii-boiko-s3-test-<br>read-group</div></div></div>
        </div>
      </section>

      <div class="page-tabs">
        <div class="ptab active">Users<br><span class="count">(1)</span></div>
        <div class="ptab perms">Permissions</div>
        <div class="ptab last">Last Accessed</div>
      </div>

      <section class="card">
        <div class="list-head">
          <div class="list-top">
            <div class="list-title">
              <h2>Users in this group <span>(1)</span></h2>
              <p>An IAM user is an entity that you create in AWS to represent the person or application that uses it to interact with AWS.</p>
            </div>
            <div class="actions">
              <button class="btn icon"><svg class="i32"><use href="#refresh"/></svg></button>
              <button class="btn remove">Remove</button>
              <button class="btn add">Add users</button>
            </div>
          </div>
          <div class="list-tools">
            <div class="list-search"><svg class="i30"><use href="#search"/></svg><span>Search</span></div>
            <div class="pager">
              <svg class="page-arrow flip"><use href="#chevron"/></svg><b>1</b><svg class="page-arrow"><use href="#chevron"/></svg>
              <span class="prefs"><svg class="i32"><use href="#gear"/></svg></span>
            </div>
          </div>
        </div>
        <div class="grid head">
          <div class="th check"><i class="box"></i></div>
          <div class="th name">User name<svg class="i28"><use href="#external"/></svg><svg class="sort up"><use href="#caret"/></svg></div>
          <div class="th">Groups</div>
          <div class="th">Last activity<svg class="sort"><use href="#caret-line"/></svg></div>
          <div class="th end">Creation time<svg class="sort"><use href="#caret-line"/></svg></div>
        </div>
        <div class="grid row">
          <div class="td check"><i class="box"></i></div>
          <div class="td"><a class="link user">andrii-boiko-s3-test-user</a></div>
          <div class="td">1</div>
          <div class="td">Now</div>
          <div class="td">1 minute ago</div>
        </div>
      </section>
    </main>

    <aside class="rail">
      <div class="rail-item first"><svg class="i32" viewBox="0 0 32 32"><circle cx="16" cy="16" r="13.500" fill="none" stroke="#545b64" stroke-width="3.600"/><path d="M16 8v3.500M16 14v10" stroke="#545b64" stroke-width="3.600"/></svg></div>
      <div class="rail-item"><svg class="i32" viewBox="0 0 32 32"><path d="M16 2l12 7v14l-12 7-12-7V9z" fill="none" stroke="#545b64" stroke-width="3.600" stroke-linejoin="round"/><circle cx="16" cy="16" r="4.500" fill="#545b64"/><path d="M16 16l10 6" stroke="#545b64" stroke-width="4"/></svg></div>
    </aside>
  </div>

  <footer class="footer">
    <svg class="i32"><use href="#shell"/></svg><span class="cs">CloudShell</span><span class="fb">Feedback</span>
    <span class="copyright">© 2024, Amazon Web Services, Inc. or its affiliates.</span>
    <span class="privacy">Privacy</span><span class="terms">Terms</span><span class="cookie">Cookie preferences</span>
  </footer>
</div>
</body>
</html>
```
FILE: styles.css
```css
* { box-sizing: border-box; }
body {
  margin: 0;
  width: 3680px;
  height: 2250px;
  padding: 76px 112px 0;
  background: #fff;
  overflow: hidden;
  font-family: "Noto Sans", "Open Sans", sans-serif;
  font-size: 27px;
  line-height: 44px;
  color: #16191f;
}
svg { display: block; flex: none; overflow: visible; }
h1, h2, p { margin: 0; }
button { font: inherit; }
.sprite { position: absolute; }
.fav-text { font-family: "Noto Sans", sans-serif; }
.fav-slab { font-family: "DejaVu Serif", serif; font-weight: 700; }
.fav-cjk { font-family: "Noto Sans CJK SC", sans-serif; }
.i28 { width: 28px; height: 28px; }
.i30 { width: 30px; height: 30px; }
.i32 { width: 32px; height: 32px; }
.i48 { width: 48px; height: 48px; }

.window {
  position: relative;
  width: 3456px;
  height: 2026px;
  display: flex;
  flex-direction: column;
  border-radius: 20px;
  background: #1f2221;
  box-shadow: 0 0 0 1.500px rgba(0, 0, 0, .85), 0 36px 70px rgba(0, 0, 0, .7);
}
.window::after {
  content: "";
  position: absolute;
  inset: 0;
  border-radius: 20px;
  box-shadow: inset 0 2px 0 rgba(255, 255, 255, .35), inset 0 0 0 2px rgba(255, 255, 255, .12);
  pointer-events: none;
}

/* tab strip */
.tabstrip { height: 80px; flex: none; display: flex; align-items: flex-start; }
.lights { width: 184px; padding: 29px 0 0 42px; display: flex; gap: 16px; }
.light { width: 24px; height: 24px; border-radius: 50%; }
.red { background: #ed6a5e; }
.yellow { background: #f5bf4f; }
.green { background: #61c554; }
.tabs { display: flex; padding-top: 24px; }
.tab { display: flex; width: 44px; height: 32px; justify-content: space-between; }
.narrow .tab { width: 42px; }
.tab svg { width: 32px; height: 32px; }
.tab::after { content: ""; width: 4px; height: 32px; margin: 1px 3px 0 0; background: #3f4140; border-radius: 2px; }
.tab.bare { width: 20px; }
.tab.bare::after { display: none; }
.tab-active { width: 100px; height: 80px; padding-top: 12px; }
.tab-shape { width: 112px; height: 68px; }
.new-tab { width: 24px; height: 24px; margin: 28px 0 0 16px; }
.tab-search { margin: 12px 12px 0 auto; width: 56px; height: 56px; border-radius: 20px; background: #3c3c3c; display: flex; align-items: center; justify-content: center; }
.tab-search svg { width: 20px; height: 20px; }

/* toolbar */
.toolbar { height: 94px; flex: none; display: flex; align-items: center; background: #3c3c3c; border-radius: 20px 20px 0 0; border-bottom: 2px solid #4a4d4d; }
.nav-buttons { width: 240px; flex: none; padding-left: 29px; display: flex; gap: 40px; }
.nav { width: 32px; height: 32px; }
.omnibox { width: 1932px; flex: none; height: 68px; border-radius: 34px; background: #282828; display: flex; align-items: center; padding: 0 32px 0 9px; }
.site-info { width: 50px; height: 50px; border-radius: 50%; background: #3c3c3c; display: flex; align-items: center; justify-content: center; }
.site-info svg { width: 28px; height: 28px; }
.url { margin-left: 15px; font-family: "Inter", sans-serif; font-size: 27.800px; color: #c7c7c7; white-space: nowrap; }
.url b { font-weight: 400; color: #e8e8e8; }
.star { width: 32px; height: 32px; margin-left: auto; }
.extensions { display: flex; padding-left: 16px; }
.ext { position: relative; width: 72px; display: flex; justify-content: center; align-items: center; }
.ext svg { width: 32px; height: 32px; }
.badge { position: absolute; left: 12px; top: 16px; width: 48px; height: 28px; border-radius: 8px; background: #d8342c; color: #fff; font: 700 22px/28px "Noto Sans", sans-serif; text-align: center; }
.toolbar-rule { width: 4px; height: 32px; margin-left: 17px; background: #5c5c5c; border-radius: 2px; }
.browser-actions { display: flex; margin-left: 15px; }
.avatar { width: 40px; height: 40px; border-radius: 50%; background: #fff; color: #000; font: 500 31px/38px "Noto Sans CJK JP", sans-serif; text-align: center; }

/* console header */
.aws-nav { position: relative; height: 138px; flex: none; background: #252f3e; border-bottom: 2px solid #545b64; color: #fff; font-size: 23.500px; font-weight: 500; }
.focus-bar { position: absolute; left: 0; top: 6px; width: 10px; height: 88px; background: #3b78e7; }
.nav-row { height: 80px; display: flex; align-items: center; }
.logo-cell { width: 134px; height: 44px; padding-left: 36px; border-right: 2px solid #414b58; }
.logo { display: flex; flex-direction: column; width: 64px; margin-top: -7px; }
.logo-word { font: 500 37px/36px "Noto Sans", sans-serif; letter-spacing: -1.400px; text-align: center; }
.smile { width: 64px; height: 16px; margin-top: 0; }
.services-cell { width: 205px; padding-left: 34px; display: flex; align-items: center; gap: 16px; }
.nav-text { line-height: 36px; letter-spacing: -.35px; white-space: nowrap; padding-top: 1px; }
.services { letter-spacing: -.15px; }
.nav-search { width: 1080px; height: 60px; border: 2px solid #879596; border-radius: 4px; background: #16191f; display: flex; align-items: center; padding: 0 19px 0 22px; color: #d5dbdb; font-size: 27px; font-weight: 400; }
.nav-search span { padding-top: 2px; }
.nav-ph { margin-left: 20px; font-style: italic; color: #95a5a6; letter-spacing: .5px; }
.nav-key { margin-left: auto; color: #95a5a6; letter-spacing: .3px; }
.nav-tools { display: flex; margin-left: 847px; }
.tool { width: 100px; height: 44px; display: flex; align-items: center; justify-content: center; border-right: 2px solid #414b58; }
.tool:first-child { width: 99px; }
.region { width: 171px; height: 44px; padding-left: 33px; display: flex; align-items: center; gap: 13px; border-right: 2px solid #414b58; }
.caret-s { width: 17px; height: 14px; }
.account { padding-left: 34px; display: flex; align-items: center; gap: 12px; }
.acct { letter-spacing: .23px; }
.fav-row { display: flex; padding: 4px 0 0 36px; }
.fav { display: flex; align-items: center; gap: 10px; height: 48px; letter-spacing: -.15px; white-space: nowrap; }
.f1 { width: 118px; }
.f2 { width: 134px; }
.f3 { width: 272px; letter-spacing: -.28px; }
.f4 { width: 132px; }
.f5 { width: 134px; }

/* page body */
.workspace { height: 1652px; flex: none; display: flex; }
.sidebar { width: 560px; background: #fff; color: #545b64; box-shadow: 2px 0 2px rgba(0, 28, 36, .18); z-index: 1; }
.side-head { height: 170px; padding: 41px 45px 0 64px; display: flex; justify-content: space-between; border-bottom: 2px solid #eaeded; }
.side-head h2 { font-size: 35px; line-height: 44px; letter-spacing: -.76px; color: #16191f; }
.close { width: 27px; height: 27px; margin-top: 7px; }
.side-search { margin: 40px 64px 0; height: 64px; border: 2px solid #687078; border-radius: 4px; display: flex; align-items: center; padding-left: 16px; color: #687078; }
.side-search span, .list-search span { margin-left: 18px; font-style: italic; letter-spacing: .5px; padding-top: 1px; }
.side-rule { margin: 48px 40px 0; border: 0; height: 2px; background: #eaeded; }
.side-nav { display: flex; flex-direction: column; padding-left: 64px; }
.item { height: 60px; line-height: 60px; display: flex; align-items: center; letter-spacing: -.06px; }
.dash { margin: 40px 0 24px; letter-spacing: -.25px; }
.group { height: 60px; display: flex; align-items: center; margin-left: -38px; font-weight: 700; letter-spacing: -.76px; margin-bottom: 2px; }
.caret-m { width: 20px; height: 16px; margin-right: 16px; }
.current { font-weight: 700; color: #2b6fb8; letter-spacing: -.6px; }
.second { margin-top: 24px; letter-spacing: -.65px; }
.sub { padding-left: 40px; letter-spacing: -.12px; }
.scp { letter-spacing: .05px; }
.lower { margin-top: 40px; }
.related-title { margin-top: 52px; line-height: 44px; font-size: 23px; font-style: italic; letter-spacing: .4px; margin-bottom: 10px; }
.related svg { margin-left: 10px; }
.orgs { letter-spacing: .03px; }

.main { width: 2816px; padding: 40px 80px 0; background: #f2f3f3; }
.link { color: #2b6fb8; border-bottom: 2px solid #2b6fb8; line-height: 36px; }
.crumbs { height: 44px; display: flex; align-items: center; color: #687078; white-space: nowrap; }
.crumbs .link { height: 38px; line-height: 38px; }
.crumb-iam { letter-spacing: -.5px; }
.crumb-ug { letter-spacing: -.42px; }
.crumbs svg { width: 16px; height: 28px; margin: 0 24px 0 25px; }
.crumbs b { letter-spacing: .04px; }
.page-head { display: flex; height: 64px; margin-top: 48px; }
.page-head h1 { font-weight: 400; font-size: 54px; line-height: 54px; letter-spacing: .46px; }
.info { margin: 18px 0 0 17px; font-weight: 700; font-size: 23px; line-height: 44px; letter-spacing: -.2px; color: #2b6fb8; }
.btn { height: 64px; padding: 0; border: 2px solid #545b64; border-radius: 4px; background: #fff; color: #545b64; font-weight: 700; display: flex; align-items: center; justify-content: center; line-height: 36px; }
.delete { width: 171px; margin-left: auto; letter-spacing: -.2px; }
.edit { width: 138px; }
.icon { width: 100px; }
.remove { width: 191px; border-color: #d5dbdb; color: #879596; letter-spacing: -.3px; }
.add { width: 217px; }

.card { background: #fff; box-shadow: 0 2px 2px rgba(0, 28, 36, .5), 2px 2px 2px rgba(0, 28, 36, .12), -2px 2px 2px rgba(0, 28, 36, .12), 0 -2px 0 #eaeded; }
.card h2 { font-size: 35px; line-height: 44px; letter-spacing: -.65px; }
.summary { margin-top: 50px; }
.card-head { height: 128px; padding: 30px 40px 0; display: flex; justify-content: space-between; background: #fafafa; border-bottom: 2px solid #eaeded; }
.card-head h2 { margin-top: 8px; letter-spacing: -.5px; }
.details { height: 208px; padding: 32px 40px 40px; display: flex; }
.detail { width: 886px; height: 136px; border-right: 2px solid #eaeded; padding-left: 40px; }
.detail:first-child { width: 848px; padding-left: 0; }
.detail:last-child { border: 0; width: auto; }
.label { color: #545b64; letter-spacing: 0; padding-top: 1px; height: 44px; }
.value { margin-top: 5px; }
.id { letter-spacing: .23px; }
.date { letter-spacing: .48px; }
.arn { display: flex; }
.copy { width: 32px; height: 32px; margin: 10px 12px 0 7px; }

.page-tabs { margin-top: 90px; height: 132px; border-bottom: 2px solid #aab7b8; display: flex; font-weight: 700; color: #545b64; }
.ptab { position: relative; height: 104px; display: flex; align-items: center; padding: 0 0 0 42px; border-right: 2px solid #aab7b8; letter-spacing: -.45px; }
.active { display: block; width: 156px; padding: 8px 0 0 42px; color: #2b6fb8; letter-spacing: -.7px; }
.active::after { content: ""; position: absolute; left: 4px; right: 0; top: 125px; height: 5px; background: #16191f; }
.count { margin-left: 9px; font-weight: 400; color: #687078; letter-spacing: 0; }
.perms { width: 241px; }
.last { border: 0; letter-spacing: -.62px; }

.list-head { height: 264px; padding: 31px 40px 0; background: #fafafa; border-bottom: 2px solid #eaeded; }
.page-tabs + .card { margin-top: 34px; }
.list-top { height: 136px; display: flex; justify-content: space-between; }
.list-title h2 { margin-top: 8px; }
.list-title h2 span { font-weight: 400; font-size: 36px; color: #687078; letter-spacing: 1px; }
.list-title p { margin-top: 14px; font-size: 23px; color: #545b64; letter-spacing: .145px; white-space: nowrap; }
.actions { display: flex; gap: 16px; color: #545b64; }
.list-tools { display: flex; justify-content: space-between; }
.list-search { width: 1296px; height: 64px; border: 2px solid #687078; border-radius: 4px; background: #fff; display: flex; align-items: center; padding-left: 16px; color: #687078; }
.pager { display: flex; align-items: center; color: #545b64; }
.pager b { width: 96px; text-align: center; color: #16191f; }
.page-arrow { width: 16px; height: 28px; color: #aab7b8; }
.flip { transform: scaleX(-1); }
.prefs { height: 64px; margin-left: 28px; padding: 16px 10px 0 27px; border-left: 2px solid #eaeded; }

.grid { display: grid; grid-template-columns: 108px 1748px 200px 301px 299px; align-items: center; }
.head { height: 82px; background: #fafafa; border-bottom: 2px solid #eaeded; font-weight: 700; color: #545b64; }
.row { height: 81px; }
.th { height: 44px; padding: 0 28px 0 40px; border-right: 2px solid #687078; display: flex; align-items: center; letter-spacing: -.42px; }
.td { padding-left: 40px; letter-spacing: .1px; }
.head .check, .row .check { padding-left: 40px; border-color: #eaeded; }
.name { color: #16191f; letter-spacing: -.75px; }
.name .i28 { margin-left: 11px; }
.sort { width: 21px; height: 20px; margin-left: auto; color: #687078; }
.th.end { border: 0; padding-right: 29px; }
.up { transform: scaleY(-1); color: #16191f; }
.box { display: block; width: 28px; height: 28px; border: 2px solid #687078; border-radius: 4px; background: #fff; }
.user { display: inline-block; letter-spacing: .2px; }

.rail { width: 80px; background: #fff; box-shadow: -2px 0 2px rgba(0, 28, 36, .18); z-index: 1; }
.rail-item { height: 82px; display: flex; align-items: center; justify-content: center; }
.first { border-bottom: 2px solid #d5dbdb; }

.footer { height: 62px; flex: none; display: flex; align-items: center; padding: 2px 33px 0 32px; background: #252f3e; border-top: 2px solid #545b64; border-radius: 0 0 20px 20px; color: #fff; font-size: 23px; font-weight: 500; letter-spacing: -.1px; }
.cs { margin-left: 11px; }
.fb { margin-left: 50px; }
.copyright { margin-left: auto; letter-spacing: -.02px; }
.privacy { margin-left: 60px; }
.terms { margin-left: 50px; }
.cookie { margin-left: 50px; letter-spacing: -.35px; }
```
